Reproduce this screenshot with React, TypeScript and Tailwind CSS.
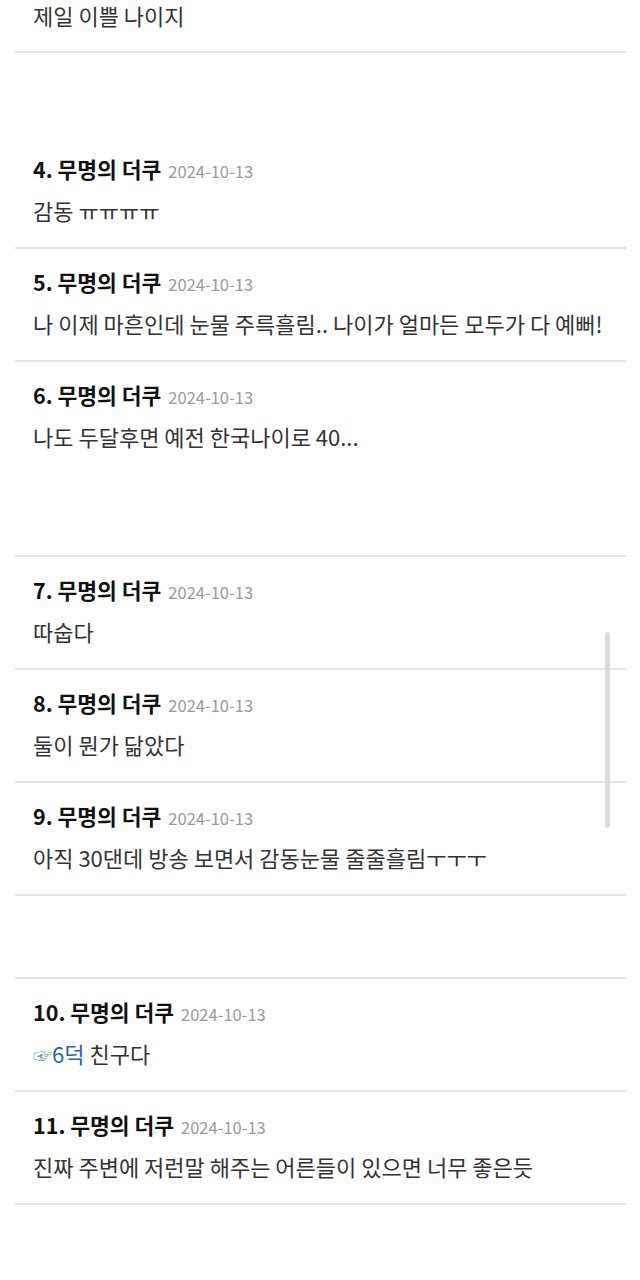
import React from "react";

type C = { n: number; body: React.ReactNode; tall?: boolean };

const comments: C[] = [
  { n: 4, body: "감동 ㅠㅠㅠㅠ" },
  { n: 5, body: "나 이제 마흔인데 눈물 주륵흘림.. 나이가 얼마든 모두가 다 예뻐!" },
  { n: 6, body: "나도 두달후면 예전 한국나이로 40...", tall: true },
  { n: 7, body: "따숩다" },
  { n: 8, body: "둘이 뭔가 닮았다" },
  { n: 9, body: "아직 30댄데 방송 보면서 감동눈물 줄줄흘림ㅜㅜㅜ" },
];

const comments2: C[] = [
  {
    n: 10,
    body: (
      <>
        <span className="text-[#6f8fb8] text-[19px]">☞</span>
        <span className="text-[#2f64a8]">6덕</span> 친구다
      </>
    ),
  },
  { n: 11, body: "진짜 주변에 저런말 해주는 어른들이 있으면 너무 좋은듯" },
];

function Comment({ c }: { c: C }) {
  return (
    <div
      className={`border-b-2 border-[#e6e6e6] pl-[18px] pt-[19px] ${c.tall ? "h-[195px]" : "h-[113px]"}`}
    >
      <div className="flex items-baseline h-[28px] leading-[28px]">
        <span className="text-[21.5px] font-bold text-[#111]">{c.n}. 무명의 더쿠</span>
        <span className="ml-[7px] text-[16.5px] text-[#9a9a9a]">2024-10-13</span>
      </div>
      <div className="mt-[13px] h-[28px] leading-[28px] text-[22px] text-[#333] whitespace-nowrap">
        {c.body}
      </div>
    </div>
  );
}

export default function App() {
  return (
    <div
      className="relative w-[640px] h-[1280px] bg-white overflow-hidden"
      style={{ fontFamily: '"Noto Sans CJK KR", "Noto Sans", sans-serif' }}
    >
      <div className="ml-[15px] mr-[14px]">
        <div className="border-b-2 border-[#e6e6e6] pl-[18px] pt-[1px] h-[53px]">
          <div className="h-[28px] leading-[28px] text-[22px] text-[#333]">제일 이쁠 나이지</div>
        </div>
        <div className="h-[83px]" />
        {comments.map((c) => (
          <Comment key={c.n} c={c} />
        ))}
        <div className="h-[83px] border-b-2 border-[#e6e6e6]" />
        {comments2.map((c) => (
          <Comment key={c.n} c={c} />
        ))}
      </div>
      <div className="absolute left-[605px] top-[632px] w-[5px] h-[196px] rounded-full bg-[#dcdcdc]" />
    </div>
  );
}
